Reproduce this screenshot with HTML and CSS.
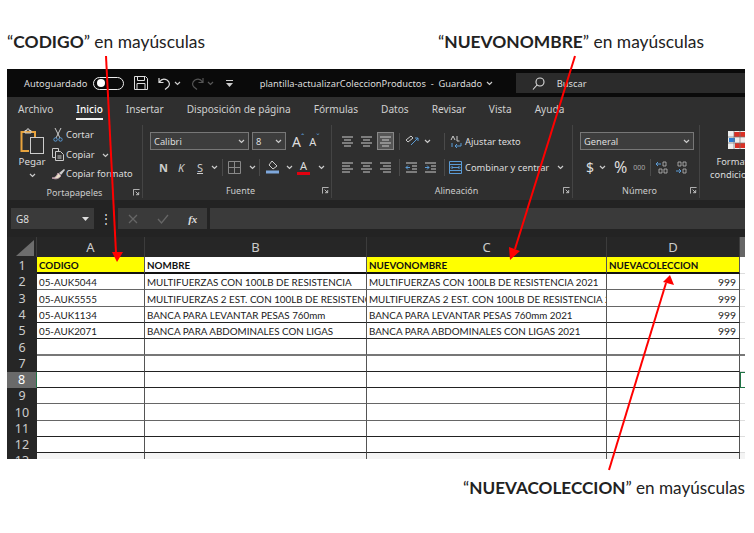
FILE: index.html
```html
<!DOCTYPE html>
<html lang="es">
<head>
  <meta charset="UTF-8" />
  <title>plantilla-actualizarColeccionProductos</title>
  <link rel="stylesheet" href="styles.css">
</head>
<body>
  <svg width="0" height="0" class="defs">
    <symbol id="launcher" viewBox="0 0 8 8"><path d="M.5 7.5v-7h7M3 3l3.5 3.5M3.5 6.5h3v-3" fill="none" stroke="#ccc"/></symbol>
    <symbol id="chev" viewBox="0 0 7 5"><path d="M1 1l2.5 2.5L6 1" fill="none" stroke="#ccc" stroke-width="1.2"/></symbol>
    <symbol id="al-center" viewBox="0 0 13 13"><path d="M1 2h11M3 5h7M1 8h11M3 11h7" stroke="#ccc"/></symbol>
    <symbol id="al-left" viewBox="0 0 13 13"><path d="M1 2h11M1 5h8M1 8h11M1 11h8" stroke="#ccc"/></symbol>
    <symbol id="al-right" viewBox="0 0 13 13"><path d="M1 2h11M4 5h8M1 8h11M4 11h8" stroke="#ccc"/></symbol>
  </svg>

  <div class="captions">
    <p class="caption">“<b>CODIGO</b>” en mayúsculas</p>
    <p class="caption">“<b>NUEVONOMBRE</b>” en mayúsculas</p>
  </div>

  <div class="excel">
    <div class="titlebar">
      <span class="autosave">Autoguardado</span>
      <span class="toggle"><i></i></span>
      <svg class="t-save" width="14" height="14" viewBox="0 0 14 14" fill="none" stroke="#ddd"><path d="M.5.5h11l2 2v11H.5zM3.5.5v4h7v-4M3 13.5v-6h8v6"/></svg>
      <svg class="t-undo" width="13" height="13" viewBox="0 0 13 13" fill="none" stroke="#ddd" stroke-width="1.2"><path d="M1 1v4.5h4.5M1.5 5C3 2.5 6 1.500 9 3c3 2 3 5 1 7l-3 2.500"/></svg>
      <svg class="t-c1" width="7" height="5"><use href="#chev"/></svg>
      <svg class="t-redo" width="13" height="13" viewBox="0 0 13 13" fill="none" stroke="#555" stroke-width="1.2"><path d="M12 1v4.500H7.500M11.500 5C10 2.500 7 1.500 4 3c-3 2-3 5-1 7l3 2.500"/></svg>
      <svg class="t-c2 dim" width="7" height="5"><use href="#chev"/></svg>
      <svg class="t-more" width="7" height="7" viewBox="0 0 7 7" fill="#ccc"><path d="M0 0h7v1H0zM0 3h7L3.500 7z"/></svg>
      <span class="doc">plantilla-actualizarColeccionProductos&nbsp; -&nbsp; Guardado</span>
      <svg class="t-c3" width="7" height="5"><use href="#chev"/></svg>
      <div class="search">
        <svg width="13" height="13" viewBox="0 0 13 13" fill="none" stroke="#ddd" stroke-width="1.1"><circle cx="8" cy="5" r="4"/><path d="M5 8l-4 4.500"/></svg>
        <span>Buscar</span>
      </div>
    </div>

    <div class="tabs">
      <span>Archivo</span><span class="on">Inicio</span><span>Insertar</span><span>Disposición de página</span><span>Fórmulas</span><span>Datos</span><span>Revisar</span><span>Vista</span><span>Ayuda</span>
    </div>

    <div class="ribbon">
      <section class="group clip">
        <div class="group-body">
          <div class="paste">
            <svg width="24" height="26" viewBox="0 0 24 26" fill="none">
              <path d="M12 4h3v13M12 4H1.500v19H9" stroke="#e8a33d" stroke-width="2"/>
              <path d="M5 5V2.500h2V1h2v1.500h2V5z" stroke="#ccc"/>
              <rect x="10.500" y="9.500" width="13" height="16" fill="#2f2f2f" stroke="#ccc"/>
            </svg>
            <span>Pegar</span>
            <svg width="7" height="5"><use href="#chev"/></svg>
          </div>
          <div class="clip-list">
            <svg width="10" height="14" viewBox="0 0 10 14" fill="none"><path d="M2 0l5 10M8 0L3 10" stroke="#ccc"/><circle cx="2.500" cy="11.500" r="1.700" stroke="#5b9bd5"/><circle cx="7.500" cy="11.500" r="1.700" stroke="#5b9bd5"/></svg>
            <span>Cortar</span>
            <svg width="13" height="13" viewBox="0 0 13 13" fill="none" stroke="#ccc"><path d="M3 9.500H.5v-9h6V3M3.500 3.500h5l3 3v6h-8zM5.500 8h4M5.500 10h4"/></svg>
            <span>Copiar<svg class="gap-chev" width="7" height="5"><use href="#chev"/></svg></span>
            <svg width="15" height="12" viewBox="0 0 15 12"><path d="M1 10c3 0 5-2 6-5l3 3c-2 2-4 4-9 2z" fill="#e9e0c8" stroke="#b9a"/><path d="M8 5l5-4 1 1-4 5" fill="#ccc"/></svg>
            <span>Copiar formato</span>
          </div>
        </div>
        <div class="group-label">Portapapeles<svg class="launcher" width="7" height="7"><use href="#launcher"/></svg></div>
      </section>

      <section class="group font">
        <div class="group-body column">
          <div class="ribbon-row">
            <div class="select w-font">Calibri<svg width="7" height="5"><use href="#chev"/></svg></div>
            <div class="select w-size">8<svg width="7" height="5"><use href="#chev"/></svg></div>
            <span class="grow-a">A<sup>ˆ</sup></span>
            <span class="shrink-a">A<sup>ˇ</sup></span>
          </div>
          <div class="ribbon-row font-tools">
            <b class="nks">N</b><i class="nks">K</i><u class="nks">S</u>
            <svg class="ml-5" width="7" height="5"><use href="#chev"/></svg>
            <span class="vr ml-1"></span>
            <svg width="13" height="13" viewBox="0 0 13 13" fill="none" stroke="#888"><path d="M.5.5h12v12H.5zM6.500.5v12M.5 6.500h12"/></svg>
            <svg class="ml3" width="7" height="5"><use href="#chev"/></svg>
            <span class="vr ml-2"></span>
            <svg class="ml1" width="13" height="14" viewBox="0 0 13 14" fill="none"><path d="M6 1l5 5-4 3-4-4z" stroke="#ccc"/><path d="M0 12h13" stroke="#7fa8dc" stroke-width="3"/></svg>
            <svg class="ml2" width="7" height="5"><use href="#chev"/></svg>
            <span class="color-a ml-1">A</span>
            <svg class="ml3" width="7" height="5"><use href="#chev"/></svg>
          </div>
        </div>
        <div class="group-label">Fuente<svg class="launcher" width="7" height="7"><use href="#launcher"/></svg></div>
      </section>

      <section class="group align">
        <div class="group-body column">
          <div class="ribbon-row">
            <svg width="13" height="13"><use href="#al-center"/></svg>
            <svg class="ml1" width="13" height="13"><use href="#al-center"/></svg>
            <span class="pressed"><svg width="13" height="13"><use href="#al-center"/></svg></span>
            <span class="vr"></span>
            <svg width="14" height="12" viewBox="0 0 14 12" fill="none"><path d="M1 5l5-4 2 2-5 4z" stroke="#ccc"/><path d="M6 10l7-7M10 3h3v3" stroke="#5b9bd5"/></svg>
            <svg width="7" height="5"><use href="#chev"/></svg>
            <span class="vr ml8"></span>
            <svg width="12" height="13" viewBox="0 0 12 13" fill="none"><path d="M1 5l2-4 2 4M7 1v5h2.500" stroke="#ccc"/><path d="M2 8v4M11 8v3H5l2-2M5 11l2 2" stroke="#5b9bd5"/></svg>
            <span class="ml-2">Ajustar texto</span>
          </div>
          <div class="ribbon-row">
            <svg width="13" height="13"><use href="#al-left"/></svg>
            <svg class="ml1" width="13" height="13"><use href="#al-center"/></svg>
            <svg class="ml1" width="13" height="13"><use href="#al-right"/></svg>
            <span class="vr ml2"></span>
            <svg width="13" height="13" viewBox="0 0 13 13" fill="none"><path d="M1 2h11M7 5h5M7 8h5M1 11h11" stroke="#ccc"/><path d="M5 6.500H1M3 4.500l-2 2 2 2" stroke="#5b9bd5"/></svg>
            <svg class="ml1" width="13" height="13" viewBox="0 0 13 13" fill="none"><path d="M1 2h11M7 5h5M7 8h5M1 11h11" stroke="#ccc"/><path d="M1 6.500h4M3 4.500l2 2-2 2" stroke="#5b9bd5"/></svg>
            <span class="vr ml2"></span>
            <svg class="ml-1" width="13" height="13" viewBox="0 0 13 13" fill="none" stroke="#5b9bd5"><path d="M.5.5h12v12H.5zM.5 3.500h12M.5 9.500h12M3 6.500h7M3.500 5l-1.500 1.500L3.500 8M9.500 5L11 6.500 9.500 8"/></svg>
            <span class="ml-2">Combinar y centrar</span>
            <svg class="ml3" width="7" height="5"><use href="#chev"/></svg>
          </div>
        </div>
        <div class="group-label">Alineación<svg class="launcher" width="7" height="7"><use href="#launcher"/></svg></div>
      </section>

      <section class="group number">
        <div class="group-body column">
          <div class="ribbon-row"><div class="select w-num">General<svg width="7" height="5"><use href="#chev"/></svg></div></div>
          <div class="ribbon-row num-tools">
            <span class="dollar">$</span>
            <svg width="7" height="5"><use href="#chev"/></svg>
            <span class="percent">%</span>
            <span class="thousand">000</span>
            <span class="vr"></span>
            <svg width="12" height="13" viewBox="0 0 12 13" fill="none"><path d="M5 3H0M2 1L0 3l2 2" stroke="#5b9bd5"/><path d="M7 1h3v4H7zM3 8h3v4H3zM8 8h3v4H8z" stroke="#bbb" stroke-width=".8"/></svg>
            <svg class="ml3" width="12" height="13" viewBox="0 0 12 13" fill="none"><path d="M2 1h3v4H2zM7 1h3v4H7zM7 8h3v4H7z" stroke="#bbb" stroke-width=".8"/><path d="M0 10h5M3 8l2 2-2 2" stroke="#5b9bd5"/></svg>
          </div>
        </div>
        <div class="group-label">Número<svg class="launcher" width="7" height="7"><use href="#launcher"/></svg></div>
      </section>

      <section class="format">
        <svg width="18" height="18" viewBox="0 0 18 18">
          <rect width="18" height="18" fill="#eee"/>
          <path d="M6 1h11v5H6z" fill="#d93025"/><path d="M1 7h6v4H1z" fill="#2b7cd3"/><path d="M7 12h10v5H7z" fill="#d93025"/>
          <path d="M6 0v18M12 0v18M0 6h18M0 12h18" stroke="#777" stroke-width=".7"/>
        </svg>
        <span>Formato</span>
        <span>condicional</span>
      </section>
    </div>

    <div class="formula">
      <div class="namebox">G8<svg width="7" height="4" viewBox="0 0 7 4"><path d="M0 0h7L3.500 4z" fill="#ddd"/></svg></div>
      <span class="dots">⋮</span>
      <div class="fx-buttons">
        <svg width="10" height="10" viewBox="0 0 10 10"><path d="M1 1l8 8M9 1L1 9" stroke="#666" stroke-width="1.300"/></svg>
        <svg width="12" height="10" viewBox="0 0 12 10"><path d="M1 5l3.500 4L11 1" fill="none" stroke="#666" stroke-width="1.300"/></svg>
        <i>fx</i>
      </div>
      <div class="fx-input"></div>
    </div>

    <table class="sheet">
      <colgroup><col class="c-head"><col class="c-a"><col class="c-b"><col class="c-c"><col class="c-d"><col class="c-e"></colgroup>
      <tr class="letters"><th class="corner"><svg width="20" height="16" viewBox="0 0 20 16"><path d="M20 0v16H2z" fill="#6d6d6d"/></svg></th><th>A</th><th>B</th><th>C</th><th>D</th><th class="e-head"></th></tr>
      <tr class="h17 title"><th>1</th><td class="yellow">CODIGO</td><td>NOMBRE</td><td class="yellow">NUEVONOMBRE</td><td class="yellow">NUEVACOLECCION</td><td></td></tr>
      <tr class="h16 soft"><th>2</th><td>05-AUK5044</td><td>MULTIFUERZAS CON 100LB DE RESISTENCIA</td><td>MULTIFUERZAS CON 100LB DE RESISTENCIA 2021</td><td class="num">999</td><td></td></tr>
      <tr class="h17 soft"><th>3</th><td>05-AUK5555</td><td>MULTIFUERZAS 2 EST. CON 100LB DE RESISTENCIA</td><td>MULTIFUERZAS 2 EST. CON 100LB DE RESISTENCIA 2021</td><td class="num">999</td><td></td></tr>
      <tr class="h16"><th>4</th><td>05-AUK1134</td><td>BANCA PARA LEVANTAR PESAS 760mm</td><td>BANCA PARA LEVANTAR PESAS 760mm 2021</td><td class="num">999</td><td></td></tr>
      <tr class="h16"><th>5</th><td>05-AUK2071</td><td>BANCA PARA ABDOMINALES CON LIGAS</td><td>BANCA PARA ABDOMINALES CON LIGAS 2021</td><td class="num">999</td><td></td></tr>
      <tr class="h17 thick"><th>6</th><td></td><td></td><td></td><td></td><td></td></tr>
      <tr class="h16"><th>7</th><td></td><td></td><td></td><td></td><td class="above-sel"></td></tr>
      <tr class="h16 current"><th>8</th><td></td><td></td><td></td><td></td><td class="selected"></td></tr>
      <tr class="h16 soft"><th>9</th><td></td><td></td><td></td><td></td><td></td></tr>
      <tr class="h17 soft"><th>10</th><td></td><td></td><td></td><td></td><td></td></tr>
      <tr class="h16"><th>11</th><td></td><td></td><td></td><td></td><td></td></tr>
      <tr class="h16"><th>12</th><td></td><td></td><td></td><td></td><td></td></tr>
      <tr class="h16 last"><th>13</th><td></td><td></td><td></td><td></td><td></td></tr>
    </table>
  </div>

  <p class="caption bottom">“<b>NUEVACOLECCION</b>” en mayúsculas</p>

  <!-- flechas rojas encima de la captura -->
  <svg class="arrows" width="754" height="533" viewBox="0 0 754 533">
    <g stroke="#f00" stroke-width="2" fill="#f00">
      <path d="M106 56l10 197"/>
      <path d="M575 56l-60 193"/>
      <path d="M609 470l57-187"/>
    </g>
    <g fill="#f00">
      <path d="M112 252h11l-6 10z"/>
      <path d="M509 247l11 4-10 9z"/>
      <path d="M663 282l11 3-4-10z"/>
    </g>
  </svg>
</body>
</html>
```

FILE: styles.css
```css
* {
  box-sizing: border-box;
}
body {
  margin: 0;
  width: 754px;
  height: 533px;
  position: relative;
  overflow: hidden;
  background: #fff;
  font-family: Lato, sans-serif;
}
.defs {
  display: block;
  height: 0;
}
svg {
  flex: none;
}

/* ajustes pequeños de margen */
.ml-5 { margin-left: -5px; }
.ml-2 { margin-left: -2px; }
.ml-1 { margin-left: -1px; }
.ml1 { margin-left: 1px; }
.ml2 { margin-left: 2px; }
.ml3 { margin-left: 3px; }
.ml8 { margin-left: 8px; }

/* textos de arriba y abajo */
.captions {
  display: flex;
  height: 69px;
  padding: 32px 0 0 7px;
  gap: 233px;
}
.caption {
  margin: 0;
  font-size: 17.4px;
  line-height: 20px;
  color: #222;
  white-space: nowrap;
}
.bottom {
  margin: 19px 0 0 463px;
  font-size: 17.15px;
}

.excel {
  width: 738px;
  height: 390px;
  margin-left: 7px;
  overflow: hidden;
  background: #232323;
  font-family: "Noto Sans", sans-serif;
  font-size: 9.3px;
  color: #ddd;
}

/* barra de titulo */
.titlebar {
  display: flex;
  align-items: center;
  height: 28px;
  background: #0a0a0a;
}
.autosave {
  margin-left: 17px;
  width: 64px;
  white-space: nowrap;
}
.toggle {
  display: flex;
  align-items: center;
  width: 31px;
  height: 13px;
  margin-left: 5px;
  padding-left: 3px;
  border: 1px solid #eee;
  border-radius: 7px;
}
.toggle i {
  width: 8px;
  height: 8px;
  border-radius: 50%;
  background: #fff;
}
.t-save { margin-left: 10px; }
.t-undo { margin-left: 10px; }
.t-c1 { margin-left: 3px; }
.t-redo { margin-left: 10px; }
.t-c2 { margin-left: 3px; }
.dim { opacity: .4; }
.t-more { margin-left: 12px; }
.doc {
  margin-left: 27px;
  width: 222px;
  white-space: nowrap;
}
.t-c3 { margin-left: 4px; }
.search {
  display: flex;
  align-items: center;
  gap: 12px;
  height: 20px;
  width: 230px;
  margin-left: 23px;
  padding-left: 16px;
  background: #2b2b2b;
}

/* pestañas */
.tabs {
  display: flex;
  gap: 23px;
  height: 27px;
  padding: 4px 0 0 11px;
  background: #2f2f2f;
  font-size: 10.1px;
  line-height: 17px;
  color: #d0d0d0;
}
.tabs .on {
  height: 19px;
  border-bottom: 2px solid #f2f2f2;
  color: #fff;
  font-weight: 500;
}

/* cinta */
.ribbon {
  display: flex;
  height: 76px;
  overflow: hidden;
  background: #2f2f2f;
}
.group {
  display: flex;
  flex: none;
  flex-direction: column;
  height: 73px;
  margin-top: 1px;
  border-right: 1px solid #444;
}
.clip { width: 136px; }
.font { width: 189px; padding-left: 7px; }
.align { width: 241px; padding-left: 9px; }
.number { width: 127px; padding-left: 7px; }
.group-body {
  display: flex;
  flex: 1;
}
.group-body.column {
  flex-direction: column;
  gap: 8px;
  padding-top: 7px;
}
.group-label {
  display: flex;
  justify-content: center;
  position: relative;
  height: 16px;
  padding-top: 2px;
  font-size: 9px;
  color: #ccc;
}
.launcher {
  position: absolute;
  right: 2px;
  top: 5px;
}
.paste {
  display: flex;
  flex-direction: column;
  align-items: center;
  width: 43px;
  padding: 3px 0 0 7px;
  font-size: 9.8px;
}
.paste span {
  margin: 1px 0 5px;
}
.clip-list {
  display: grid;
  grid-template-columns: 16px auto;
  grid-auto-rows: 19.5px;
  align-items: center;
  justify-items: center;
  align-content: start;
  padding-top: 0;
  white-space: nowrap;
}
.clip-list span {
  justify-self: start;
}
.gap-chev { margin-left: 7px; }
.ribbon-row {
  display: flex;
  align-items: center;
  gap: 5px;
  height: 18px;
  white-space: nowrap;
}
.select {
  display: flex;
  align-items: center;
  justify-content: space-between;
  height: 18px;
  padding: 0 3px;
  background: #3d3d3d;
  border: 1px solid #777;
}
.w-font { width: 99px; }
.w-size { width: 34px; margin-left: -2px; }
.w-num { width: 114px; }
.grow-a, .shrink-a {
  font-size: 14px;
  margin-left: 1px;
}
.grow-a sup, .shrink-a sup { font-size: 8px; color: #5b9bd5; line-height: 0; }
.shrink-a { margin-left: 0; font-size: 11px; }
.font-tools {
  padding-left: 9px;
}
.nks {
  width: 14px;
  font-size: 11px;
  color: #ccc;
}
.vr {
  width: 1px;
  height: 17px;
  background: #4a4a4a;
}
.color-a {
  width: 13px;
  border-bottom: 3px solid #e3000f;
  font-size: 11px;
  line-height: 13px;
  text-align: center;
}
.pressed {
  display: flex;
  align-items: center;
  justify-content: center;
  width: 17px;
  height: 18px;
  margin-left: -1px;
  background: #555;
  border: 1px solid #888;
}
.num-tools { padding-left: 6px; }
.dollar { font-size: 14px; }
.percent { font-size: 16px; margin-left: 3px; }
.thousand { font-size: 7px; margin-left: 1px; color: #aaa; }
.format {
  display: flex;
  flex: none;
  flex-direction: column;
  align-items: center;
  width: 70px;
  padding-top: 7px;
  white-space: nowrap;
  line-height: 13px;
}
.format svg { margin: 0 0 6px 4px; }

/* barra de formulas */
.formula {
  display: flex;
  align-items: center;
  height: 37px;
  padding: 0 0 0 4px;
  background: #232323;
}
.namebox {
  display: flex;
  align-items: center;
  justify-content: space-between;
  width: 83px;
  height: 21px;
  padding: 0 5px;
  background: #3a3a3a;
  font-size: 10px;
}
.dots {
  width: 24px;
  text-align: center;
  font-size: 12px;
}
.fx-buttons {
  display: flex;
  align-items: center;
  justify-content: space-around;
  width: 89px;
  height: 21px;
  background: #3a3a3a;
  font-family: "Liberation Serif", serif;
  font-weight: bold;
  font-size: 11px;
}
.fx-input {
  flex: 1;
  height: 21px;
  margin-left: 3px;
  background: #3a3a3a;
}

/* hoja */
.sheet {
  table-layout: fixed;
  width: 738px;
  border-collapse: separate;
  border-spacing: 0;
  font-family: Lato, sans-serif;
  font-size: 9.8px;
  color: #1a1a1a;
}
.c-head { width: 30px; }
.c-a { width: 108px; }
.c-b { width: 222px; }
.c-c { width: 240px; }
.c-d { width: 133px; }
.c-e { width: 5px; }
.h16 { height: 16px; }
.h17 { height: 17px; }
.sheet th {
  padding: 0;
  background: #262626;
  font-family: "Noto Sans", sans-serif;
  font-weight: normal;
  font-size: 12.5px;
  line-height: 14px;
  color: #ccc;
}
.letters {
  height: 20px;
}
.letters th {
  border-right: 1px solid #3c3c3c;
  font-size: 13px;
}
.corner {
  text-align: right;
  vertical-align: bottom;
}
.corner svg {
  display: block;
  margin: 0 2px 1px auto;
}
.sheet th.e-head {
  border: 0;
  background: #666;
}
.sheet td {
  padding: 1px 1px 0 2px;
  overflow: hidden;
  white-space: nowrap;
  background: #fff;
  border-bottom: 1px solid #222;
  border-right: 1px solid #555;
}
.sheet td:last-child {
  border-right: 0;
  border-bottom-color: #ddd;
}
.sheet .title td {
  border-bottom: 2px solid #111;
  font-weight: bold;
  color: #111;
}
.sheet .title td:last-child {
  border-bottom: 1px solid #ddd;
}
.sheet .title td.yellow {
  background: #ff0;
}
.soft td {
  border-bottom-color: #666;
}
.sheet .thick td {
  border-bottom: 2px solid #777;
}
.sheet .num {
  padding-right: 3px;
  text-align: right;
  font-size: 10.4px;
}
.sheet .current th {
  background: #6a6a6a;
  color: #fff;
  border-right: 1px solid #217346;
}
.sheet td.selected {
  border: 1px solid #217346;
  border-right: 0;
}
.last td {
  background: #f4f4f4;
}

/* flechas */
.arrows {
  position: absolute;
  left: 0;
  top: 0;
  pointer-events: none;
}
```
